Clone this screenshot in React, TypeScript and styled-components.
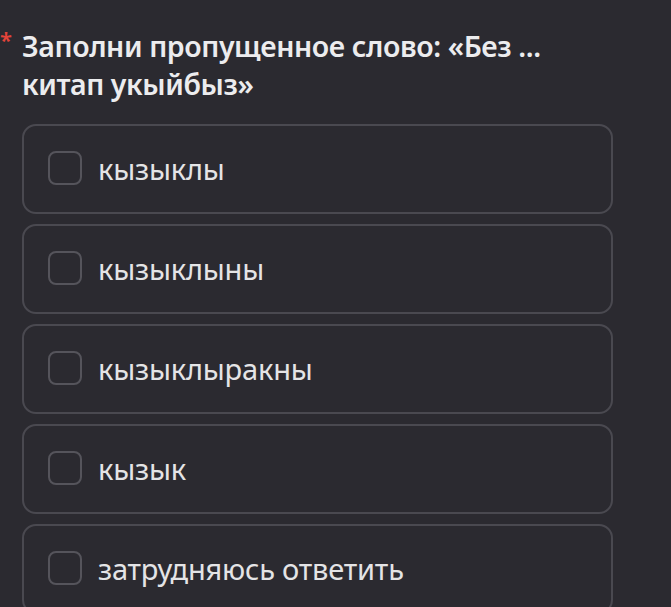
import styled, { createGlobalStyle } from 'styled-components'

const GlobalStyle = createGlobalStyle`
    html, body {
        margin: 0;
        padding: 0;
        background: #2b2a30;
    }
`

const options = [
    'кызыклы',
    'кызыклыны',
    'кызыклыракны',
    'кызык',
    'затрудняюсь ответить',
]

export default function App() {
    return (
        <Page>
            <GlobalStyle />
            <Question>
                <Required>*</Required>
                Заполни пропущенное слово: «Без ...<br />китап укыйбыз»
            </Question>
            <Options>
                {options.map((o) => (
                    <Option key={o}>
                        <Checkbox />
                        <Label>{o}</Label>
                    </Option>
                ))}
            </Options>
        </Page>
    )
}

const Page = styled.div`
    height: 607px;
    overflow: hidden;
    padding: 27px 58px 0 22px;
    box-sizing: border-box;
    font-family: 'Noto Sans', 'Open Sans', sans-serif;
    color: #e8e8ea;
`

const Question = styled.div`
    position: relative;
    font-size: 28.5px;
    font-weight: 600;
    line-height: 38px;
    letter-spacing: -0.4px;
    color: #ececee;
`

const Required = styled.span`
    position: absolute;
    left: -22px;
    top: 1px;
    color: #e5443a;
    font-size: 22px;
    line-height: 22px;
`

const Options = styled.div`
    display: flex;
    flex-direction: column;
    gap: 10px;
    margin-top: 21px;
`

const Option = styled.div`
    display: flex;
    align-items: center;
    gap: 16px;
    height: 90px;
    flex-shrink: 0;
    padding: 0 24px 2px;
    box-sizing: border-box;
    border: 2px solid #4a4950;
    border-radius: 14px;
`

const Checkbox = styled.div`
    width: 34px;
    height: 34px;
    box-sizing: border-box;
    border: 2px solid #55545b;
    border-radius: 8px;
    flex-shrink: 0;
`

const Label = styled.span`
    font-size: 29px;
    letter-spacing: -0.2px;
    color: #e4e4e6;
`
